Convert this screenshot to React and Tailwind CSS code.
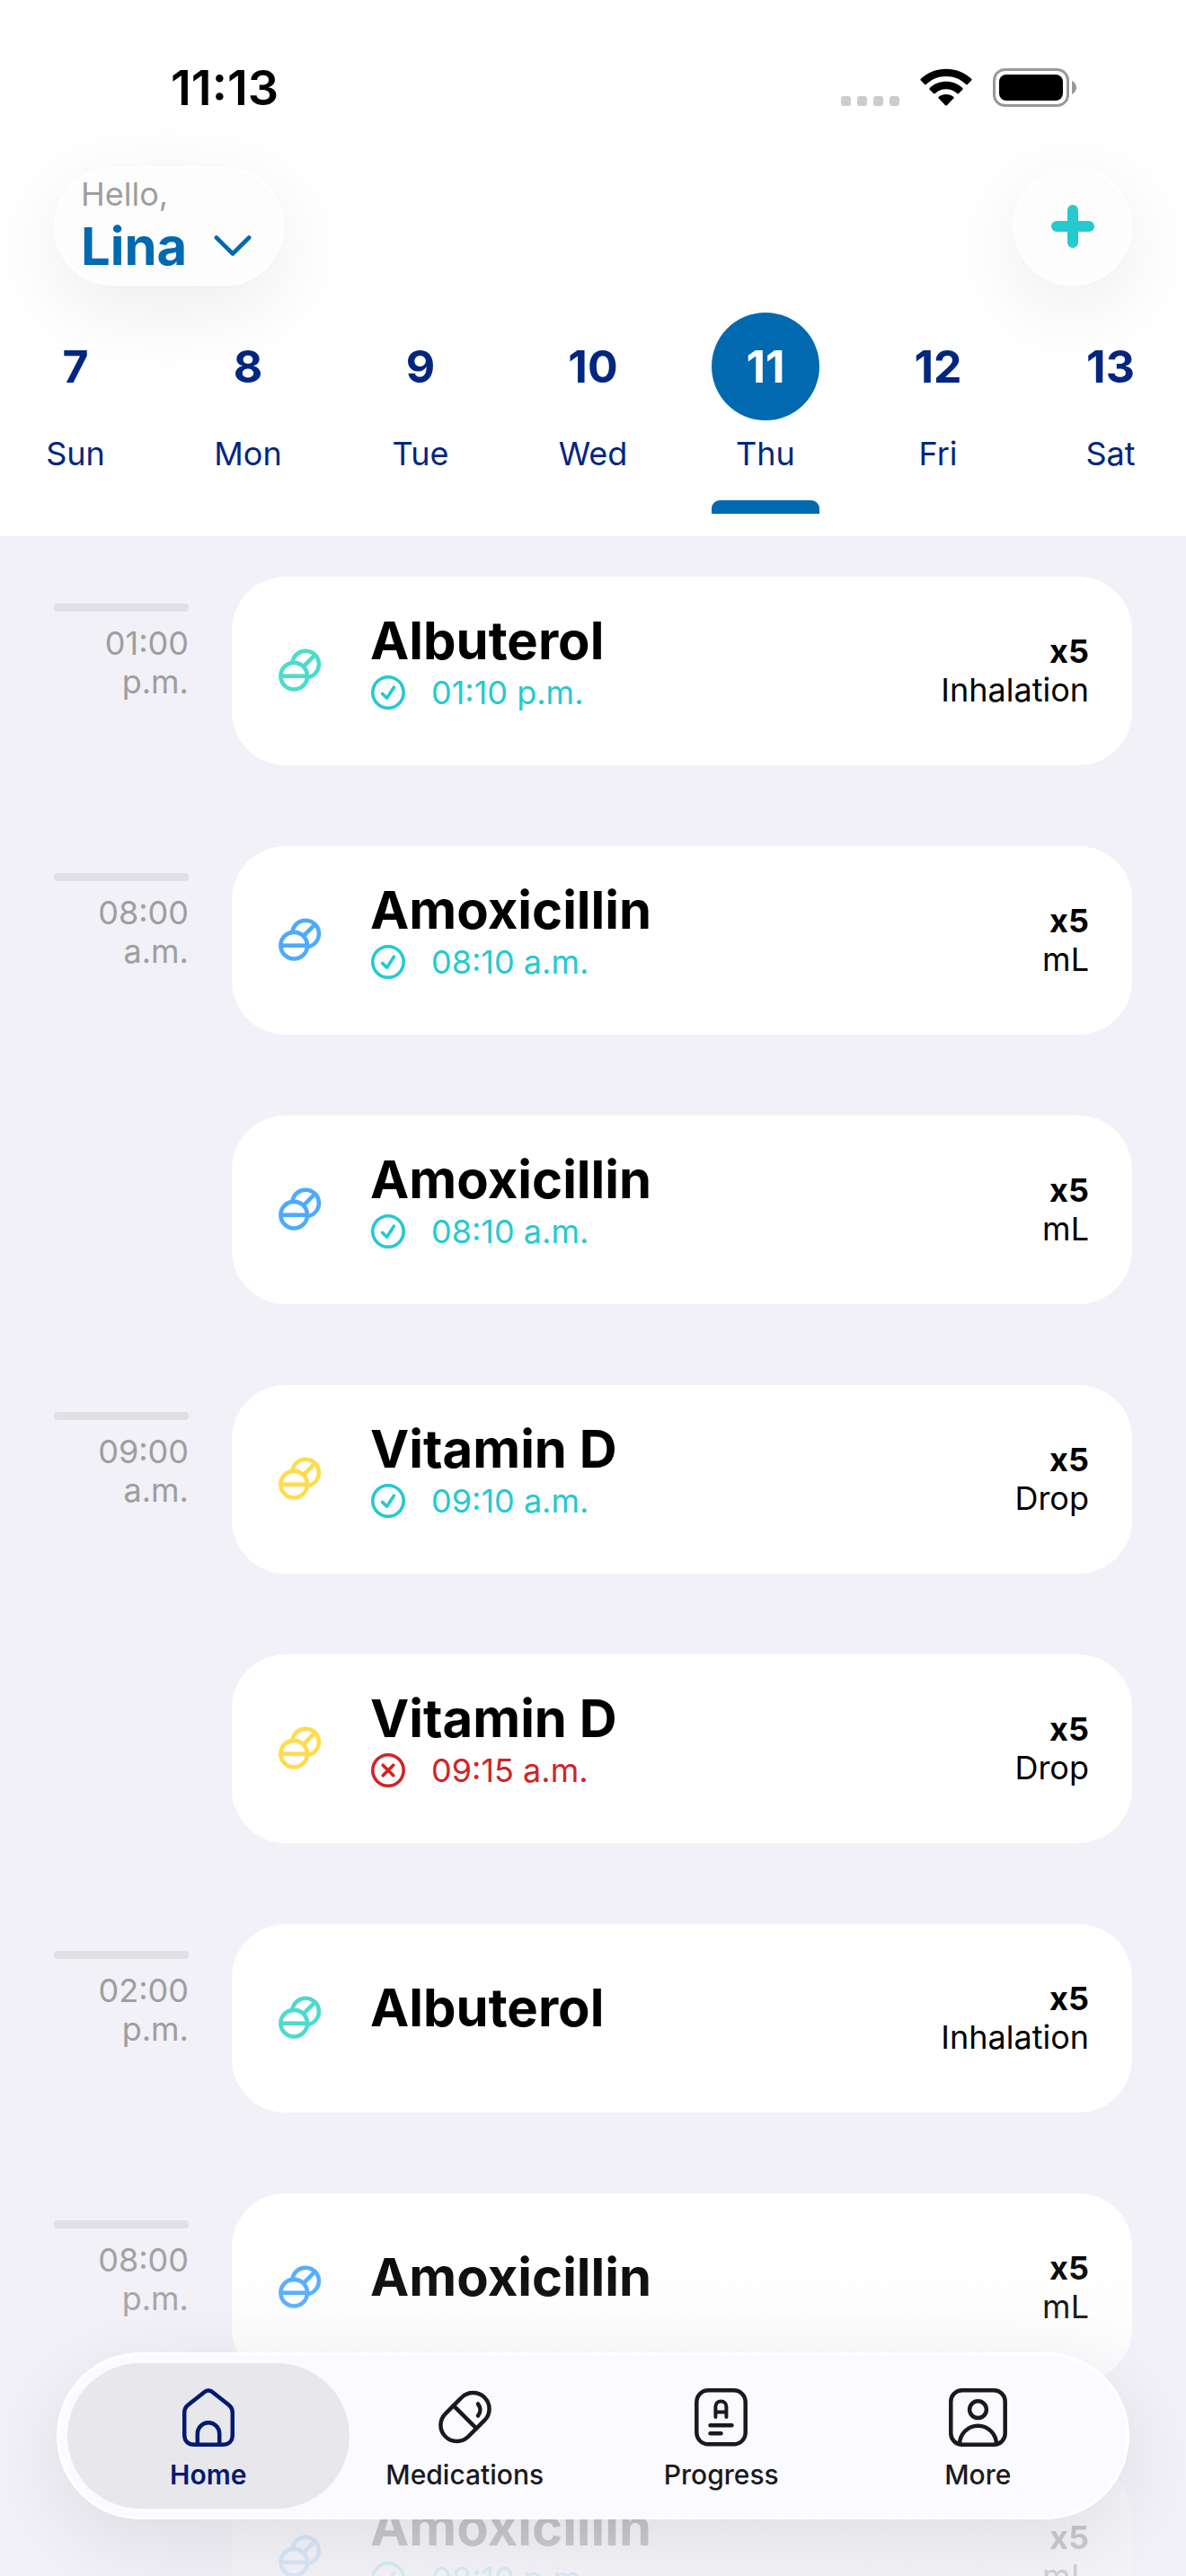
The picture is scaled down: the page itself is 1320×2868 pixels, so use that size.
import React, { useState } from 'react';

const days = [
  { id: 7, name: 'Sun' },
  { id: 8, name: 'Mon' },
  { id: 9, name: 'Tue' },
  { id: 10, name: 'Wed' },
  { id: 11, name: 'Thu' },
  { id: 12, name: 'Fri' },
  { id: 13, name: 'Sat' },
];

const doses = [
  { id: 1, slot: '01:00 p.m.', name: 'Albuterol', color: 'text-[#4ddbcc]', status: 'taken', time: '01:10 p.m.', amount: 'x5', unit: 'Inhalation' },
  { id: 2, slot: '08:00 a.m.', name: 'Amoxicillin', color: 'text-[#4daaff]', status: 'taken', time: '08:10 a.m.', amount: 'x5', unit: 'mL' },
  { id: 3, name: 'Amoxicillin', color: 'text-[#4daaff]', status: 'taken', time: '08:10 a.m.', amount: 'x5', unit: 'mL' },
  { id: 4, slot: '09:00 a.m.', name: 'Vitamin D', color: 'text-[#ffdb4d]', status: 'taken', time: '09:10 a.m.', amount: 'x5', unit: 'Drop' },
  { id: 5, name: 'Vitamin D', color: 'text-[#ffdb4d]', status: 'skipped', time: '09:15 a.m.', amount: 'x5', unit: 'Drop' },
  { id: 6, slot: '02:00 p.m.', name: 'Albuterol', color: 'text-[#4ddbcc]', amount: 'x5', unit: 'Inhalation' },
  { id: 7, slot: '08:00 p.m.', name: 'Amoxicillin', color: 'text-[#4daaff]', amount: 'x5', unit: 'mL' },
  { id: 8, name: 'Amoxicillin', color: 'text-[#4daaff]', status: 'taken', time: '08:10 p.m.', amount: 'x5', unit: 'mL' },
];

const tabs = [
  { id: 'home', label: 'Home', Icon: HomeIcon },
  { id: 'medications', label: 'Medications', Icon: CapsuleIcon },
  { id: 'progress', label: 'Progress', Icon: ReportIcon },
  { id: 'more', label: 'More', Icon: ProfileIcon },
];

function HomeIcon() {
  return (
    <svg width="58" height="66" viewBox="0 0 58 66" fill="none" stroke="currentColor" strokeWidth="4.5">
      <path d="M24.5 4.2C27.2 2 30.8 2 33.5 4.2L51.3 18.2C54.3 20.6 55.8 23 55.8 27V52C55.8 58.7 51.7 62.8 45 62.8H13C6.3 62.8 2.2 58.7 2.2 52V27C2.2 23 3.7 20.6 6.7 18.2Z" />
      <path d="M16.8 62.8V50.5a12.2 12.2 0 0 1 24.4 0V62.8" />
    </svg>
  );
}

function CapsuleIcon() {
  return (
    <svg width="59" height="66" viewBox="0 -3 59 66" fill="none" stroke="currentColor" strokeWidth="4.5" strokeLinecap="round">
      <rect x="-1.3" y="11" width="61.6" height="36" rx="18" transform="rotate(-45 29.5 29)" />
      <path d="M16.8 16.3L42.2 41.7" />
      <path d="M44 14.5C47.2 18.5 47.2 23.5 44 27.5" />
    </svg>
  );
}

function ReportIcon() {
  return (
    <svg width="59" height="66" viewBox="0 0 59 66" fill="none" stroke="currentColor" strokeWidth="4.5" strokeLinecap="round">
      <rect x="2.3" y="2.3" width="54.4" height="60" rx="13" />
      <path d="M23.4 32V20.5a6 6 0 0 1 12 0V32M23.4 26.5H35.4" strokeWidth="4" />
      <path d="M17.5 41.3H41.5M17.5 50.3H29.5" />
    </svg>
  );
}

function ProfileIcon() {
  return (
    <svg width="65" height="66" viewBox="0 0 65 66" fill="none" stroke="currentColor" strokeWidth="4.5">
      <rect x="2.3" y="2.3" width="60.4" height="60.4" rx="12.5" />
      <circle cx="32.5" cy="23.7" r="9.4" />
      <path d="M12 62.5a20.5 20.8 0 0 1 41 0" />
    </svg>
  );
}

function PillsIcon() {
  return (
    <svg width="48" height="48" viewBox="0 0 48 48" fill="none" stroke="currentColor" strokeWidth="4.6">
      <circle cx="17.2" cy="30.7" r="14.8" />
      <path d="M2.4 30.7H32" />
      <path d="M15.4 15.9A14.8 14.8 0 1 1 31.8 32.2" />
      <path d="M27.5 20.4L40.6 7.2" />
    </svg>
  );
}

function StatusIcon({ status }) {
  return (
    <svg width="40" height="38" viewBox="-1 0 40 38" fill="none" stroke="currentColor" strokeWidth="3.6" strokeLinecap="round" strokeLinejoin="round">
      <circle cx="19" cy="19" r="17.2" />
      {status === 'taken' ? <path d="M12.6 20.4L17.6 25.2L25.4 13.2" /> : <path d="M13.2 13.2L24.8 24.8M24.8 13.2L13.2 24.8" />}
    </svg>
  );
}

function StatusBar() {
  return (
    <div className="flex h-[186px] items-start justify-between pt-[68px] pr-[121px] pl-[190px]">
      <span className="text-[54px] leading-[60px] font-semibold text-black">11:13</span>
      <div className="flex h-[58px] items-center gap-[23px]">
        <div className="flex gap-[7px] pt-[30px]">
          <span className="size-[11px] rounded-[3px] bg-[#cccccc]"></span>
          <span className="size-[11px] rounded-[3px] bg-[#cccccc]"></span>
          <span className="size-[11px] rounded-[3px] bg-[#cccccc]"></span>
          <span className="size-[11px] rounded-[3px] bg-[#cccccc]"></span>
        </div>
        <svg width="58" height="43" viewBox="0 0 58 43">
          <path d="M29 9C37.5 9 45.3 12.3 51.2 17.9C51.7 18.4 52.4 18.4 52.9 17.9L57.2 13.6C57.7 13.1 57.7 12.3 57.2 11.8C41.5-3.1 16.5-3.1 0.8 11.8C0.3 12.3 0.3 13.1 0.8 13.6L5.1 17.9C5.6 18.4 6.3 18.4 6.8 17.9C12.7 12.3 20.5 9 29 9Z" />
          <path d="M29 23.2C33.7 23.2 38 24.9 41.2 28C41.7 28.5 42.5 28.5 43 28L47.3 23.7C47.8 23.2 47.8 22.4 47.3 21.9C37 12.3 21 12.3 10.7 21.9C10.2 22.4 10.2 23.2 10.7 23.7L15 28C15.5 28.5 16.3 28.5 16.8 28C20 24.9 24.3 23.2 29 23.2Z" />
          <path d="M37.3 33.6C37.8 33.1 37.8 32.3 37.2 31.8C32.5 28 25.5 28 20.8 31.8C20.2 32.3 20.2 33.1 20.7 33.6L28.1 41.2C28.6 41.7 29.4 41.7 29.9 41.2Z" />
        </svg>
        <svg width="94" height="43" viewBox="0 0 94 43">
          <rect x="1.5" y="1.5" width="82" height="40" rx="12" fill="none" stroke="#999999" strokeWidth="3" />
          <rect x="7" y="7" width="71" height="29" rx="8" />
          <path d="M88 14C91 15.2 93 18 93 21.5C93 25 91 27.8 88 29Z" fill="#999999" />
        </svg>
      </div>
    </div>
  );
}

function DoseRow({ dose }) {
  return (
    <li className="flex items-start gap-12 px-[60px] py-[45px]">
      <div className="w-[150px] shrink-0 pt-[30px] text-right text-[36px] leading-[43px] text-[#9e9e9e]">
        {dose.slot && (
          <>
            <div className="mb-[14px] h-[9px] rounded-[4px] bg-[#e0dfe4]"></div>
            <p>{dose.slot}</p>
          </>
        )}
      </div>

      <article className="flex h-[210px] min-w-0 flex-1 items-center rounded-[60px] bg-white pr-12 pl-[52px]">
        <span className={`shrink-0 pb-[3px] ${dose.color}`}>
          <PillsIcon />
        </span>
        <div className="ml-[54px] min-w-0 flex-1 pb-6">
          <h2 className="text-[58px] leading-[72px] font-bold text-black">{dose.name}</h2>
          {dose.status && (
            <p className={`flex items-center gap-7 text-[36px] leading-[44px] ${dose.status === 'taken' ? 'text-[#25c9d0]' : 'text-[#d02424]'}`}>
              <StatusIcon status={dose.status} />
              {dose.time}
            </p>
          )}
        </div>
        <div className="shrink-0 text-right text-[36px] leading-[43px] text-black">
          <p className="font-bold">{dose.amount}</p>
          <p>{dose.unit}</p>
        </div>
      </article>
    </li>
  );
}

export default function App() {
  const [selectedDay, setSelectedDay] = useState(11);
  const [activeTab, setActiveTab] = useState('home');

  return (
    <div className="relative flex h-screen flex-col overflow-hidden bg-[#f2f1f7] font-['Inter',sans-serif]">
      {/* Header */}
      <header className="shrink-0 overflow-hidden bg-white">
        <StatusBar />

        <div className="flex items-center justify-between px-[60px]">
          <button className="flex h-[132px] items-end gap-[30px] rounded-full border-2 border-white bg-[#fdfdfd] pr-[34px] pb-[6px] pl-7 text-left shadow-[0_24px_96px_rgba(0,0,0,0.08)]">
            <span>
              <span className="block text-[36px] leading-[44px] text-[#9e9e9e]">Hello,</span>
              <span className="block text-[58px] leading-[72px] font-bold text-[#0069af]">Lina</span>
            </span>
            <svg width="42" height="72" viewBox="0 0 42 72" fill="none" stroke="#0069af" strokeWidth="4.6" strokeLinecap="round" strokeLinejoin="round">
              <path d="M2.8 26.5L21 44.5L39.2 26.5" />
            </svg>
          </button>
          <button aria-label="Add medication" className="flex size-[132px] items-center justify-center rounded-full border-2 border-white bg-[#fdfdfd] shadow-[0_24px_96px_rgba(0,0,0,0.08)]">
            <svg width="48" height="48" viewBox="0 0 48 48" stroke="#25c9d0" strokeWidth="12" strokeLinecap="round">
              <path d="M24 6V42M6 24H42" />
            </svg>
          </button>
        </div>

        {/* Week strip, first and last day run past the edges a little */}
        <div className="-mx-3 grid grid-cols-7 pt-[30px] pb-[25px]">
          {days.map((d) => {
            const selected = d.id === selectedDay;

            return (
              <button key={d.id} onClick={() => setSelectedDay(d.id)} className="flex flex-col items-center text-[#00267f]">
                <span className={`flex size-[120px] items-center justify-center rounded-full text-[50px] font-bold ${selected ? 'bg-[#0069af] text-white' : ''}`}>{d.id}</span>
                <span className="mt-[15px] text-[36px] leading-[44px]">{d.name}</span>
                <span className={`mt-[30px] h-[15px] w-[120px] rounded-t-[9px] ${selected ? 'bg-[#0069af]' : ''}`}></span>
              </button>
            );
          })}
        </div>
      </header>

      {/* Dose list */}
      <main className="min-h-0 flex-1 overflow-y-auto [scrollbar-width:none]">
        <ul>
          {doses.map((dose) => (
            <DoseRow key={dose.id} dose={dose} />
          ))}
        </ul>
      </main>

      {/* Fade under the tab bar */}
      <div className="pointer-events-none absolute inset-x-0 bottom-0 h-[388px] bg-[linear-gradient(to_bottom,rgba(242,241,247,0),rgba(242,241,247,0.1)_22%,rgba(242,241,247,0.82)_85%,rgba(242,241,247,0.86))]"></div>

      {/* Tab bar */}
      <nav className="absolute inset-x-[63px] bottom-[63px] grid h-[186px] grid-cols-4 rounded-full border-[3px] border-white bg-[#fbfaff] px-[23px] py-[9px] shadow-[0_24px_96px_rgba(0,0,0,0.09)]">
        {tabs.map(({ id, label, Icon }) => (
          <button
            key={id}
            onClick={() => setActiveTab(id)}
            className={`-mx-[14px] flex flex-col items-center gap-3 rounded-full pt-7 text-[30px] leading-[36px] ${id === activeTab ? 'bg-[#e8e7ec] font-semibold text-[#001a72]' : 'font-medium text-[#1a1a1e]'}`}
          >
            <Icon />
            {label}
          </button>
        ))}
      </nav>
    </div>
  );
}
